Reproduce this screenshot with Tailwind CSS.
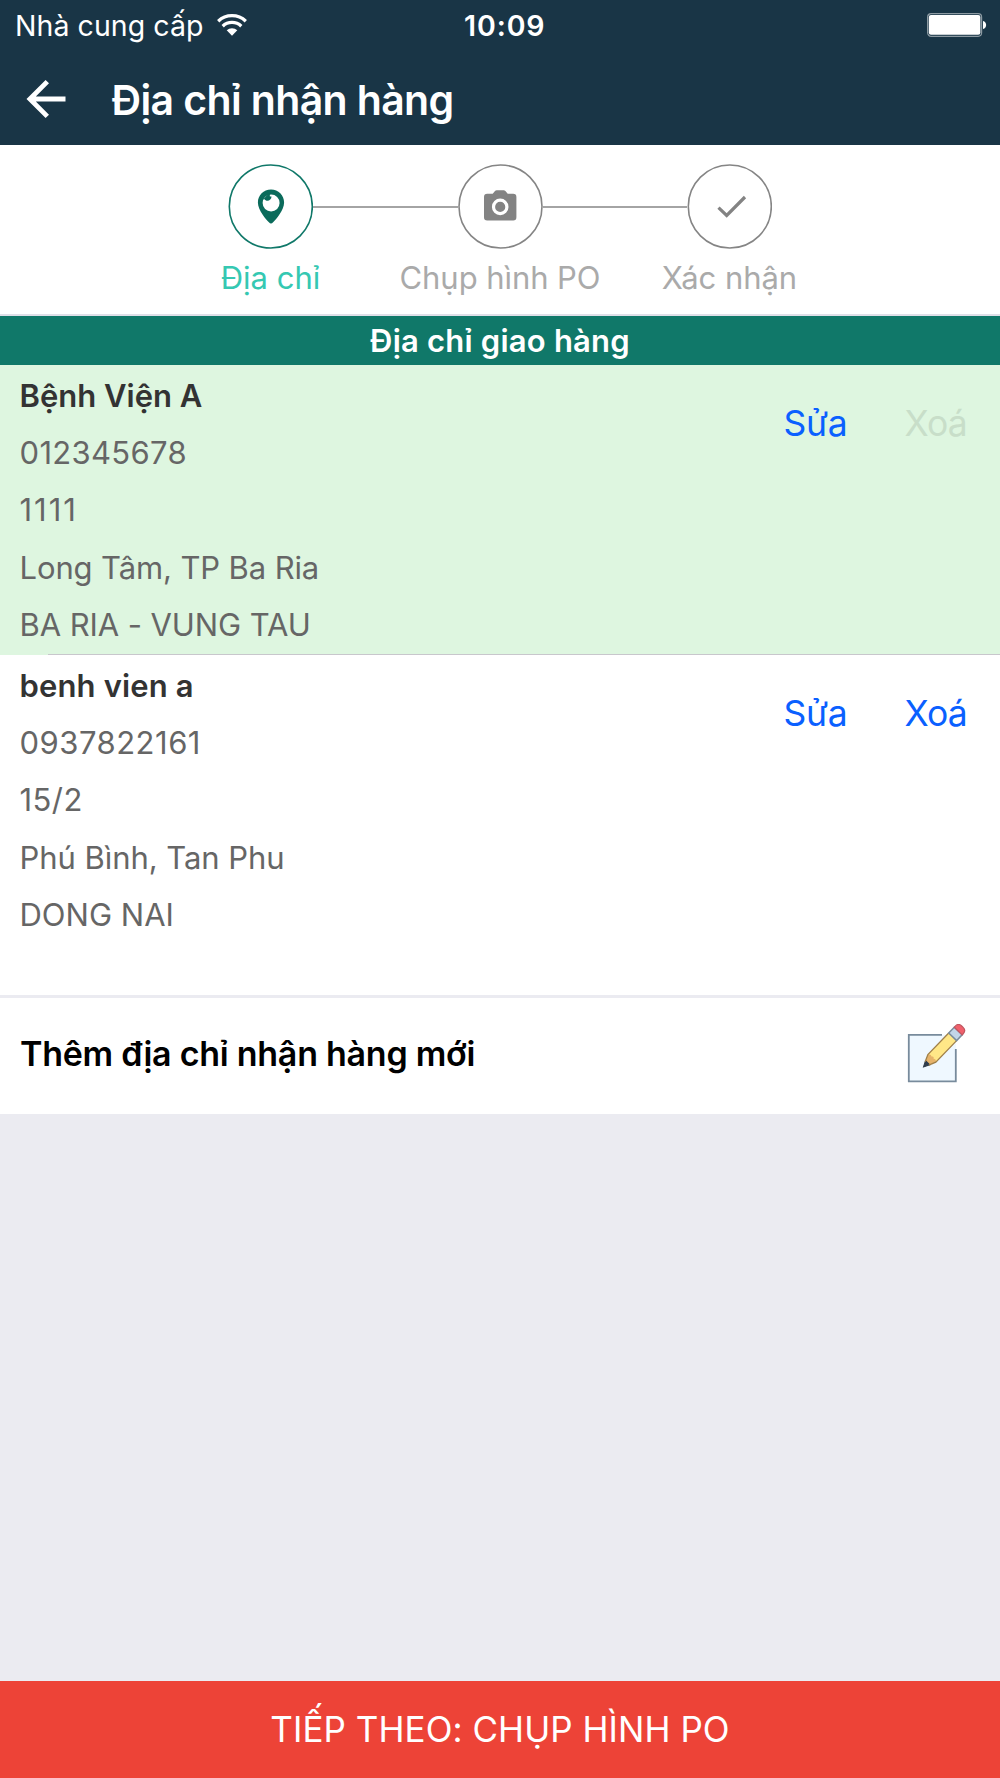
<!DOCTYPE html>
<html lang="vi">
<head>
    <meta charset="UTF-8">
    <meta name="viewport" content="width=device-width, initial-scale=1.0">
    <script src="https://cdn.jsdelivr.net/npm/@tailwindcss/browser@4"></script>
    <title>Địa chỉ nhận hàng</title>
</head>
<body class="bg-[#ebebf1] font-['Inter','Liberation_Sans',sans-serif]">
    <div class="flex h-[1778px] w-[1000px] flex-col overflow-hidden">
        <!-- Header -->
        <header class="h-[145px] shrink-0 bg-[#193546] text-white">
            <!-- Status bar -->
            <div class="grid h-[50px] grid-cols-3 items-center pl-[15px] pr-[13px] pt-px text-[28.5px] leading-[50px]">
                <div class="flex items-center gap-[13px]">
                    <span class="whitespace-nowrap tracking-[0.06px]">Nhà cung cấp</span>
                    <svg class="-mt-[3px] h-[22px] w-[30px]" viewBox="0 0 30 22" fill="none" stroke="#fff" stroke-width="3.3">
                        <path d="M1.2 7.2a20 20 0 0 1 27.6 0" />
                        <path d="M5.7 12.2a13.4 13.4 0 0 1 18.6 0" />
                        <path d="M9.7 16.3a7.6 7.6 0 0 1 10.6 0L15 21.7z" fill="#fff" stroke="none" />
                    </svg>
                </div>
                <span class="pl-[125px] font-semibold tracking-[0.9px]">10:09</span>
                <svg class="-mt-[2px] ml-auto h-[24px] w-[61px]" viewBox="0 0 61 24">
                    <rect x="1.6" y="0.7" width="54" height="22.6" rx="3.5" fill="none" stroke="#8c9aa2" stroke-width="1.2" />
                    <rect x="2.8" y="1.9" width="51.6" height="19.8" rx="2.2" fill="#fff" />
                    <path d="M57 8c4.2 .8 4.2 7.2 0 8z" fill="#fff" />
                </svg>
            </div>
            <!-- Title bar -->
            <div class="flex h-[95px] items-center pl-[26px] pt-1">
                <svg class="-mt-[2px] h-[40px] w-[40px]" viewBox="0 0 40 40" fill="none" stroke="#fff" stroke-width="4.8">
                    <path d="M39.5 20H4.5M21.3 2.6L3.9 20l17.4 17.4" />
                </svg>
                <h1 class="pl-[45.5px] pt-[2px] text-[41px] font-semibold leading-none tracking-[-0.63px]">Địa chỉ nhận hàng</h1>
            </div>
        </header>

        <!-- Steps -->
        <section class="flex h-[171px] shrink-0 flex-col border-b-2 border-[#dfdfe8] bg-white pt-[19px]">
            <div class="flex items-center justify-center">
                <svg class="size-[85px]" viewBox="0 0 85 85">
                    <circle cx="42.8" cy="42.5" r="41.5" fill="none" stroke="#107869" stroke-width="1.6" />
                    <g transform="translate(29.5 25.5)">
                        <path d="M13.5 0C6 0 .4 5.7 .4 13c0 8 8.3 17 11 19.8 1.5 1.6 2.7 1.6 4.2 0C18.3 30 26.6 21 26.6 13 26.6 5.7 21 0 13.5 0z" fill="#0b6b5b" />
                        <circle cx="13.6" cy="13.6" r="8.5" fill="#fff" />
                        <path d="M5 10.5L11 4.3q2.6 .6 1 2.2.9.7 2 .6c.1 4.2-5.2 5.6-7.3 2.400z" fill="#0b6b5b" />
                    </g>
                </svg>
                <div class="h-[2px] w-[144.5px] bg-[#a4a4a4]"></div>
                <svg class="size-[85px]" viewBox="0 0 85 85">
                    <circle cx="42.5" cy="42.5" r="41.5" fill="none" stroke="#858585" stroke-width="1.6" />
                    <g transform="translate(25.7 26)">
                        <path d="M3.5 3.8H9L11.3.9Q12 .2 13 .2h7q1 0 1.7.7L24 3.8h5.5a3.2 3.2 0 0 1 3.2 3.2v20.3a3.2 3.2 0 0 1-3.2 3.2h-26A3.2 3.2 0 0 1 .3 27.3V7a3.2 3.2 0 0 1 3.2-3.2z" fill="#838383" />
                        <circle cx="16.5" cy="16.9" r="6.7" fill="#838383" stroke="#fff" stroke-width="3.2" />
                    </g>
                </svg>
                <div class="h-[2px] w-[144.5px] bg-[#a4a4a4]"></div>
                <svg class="size-[85px]" viewBox="0 0 85 85">
                    <circle cx="42.8" cy="42.5" r="41.5" fill="none" stroke="#858585" stroke-width="1.6" />
                    <path d="M31.5 43.6L39.7 51.5 58 33" fill="none" stroke="#838383" stroke-width="3.2" />
                </svg>
            </div>
            <div class="mt-[9px] flex justify-center text-[31px] leading-[40px] text-[#aaa]">
                <span class="w-[229.5px] text-center text-[#35c8b2]">Địa chỉ</span>
                <span class="w-[229.5px] text-center tracking-[-0.06px]">Chụp hình PO</span>
                <span class="w-[229.5px] text-center tracking-[-0.04px]">Xác nhận</span>
            </div>
        </section>

        <!-- Address list -->
        <section class="shrink-0">
            <h2 class="h-[49px] bg-[#107869] text-center text-[31px] font-semibold leading-[49px] tracking-[0.21px] text-white">Địa chỉ giao hàng</h2>
            <div class="relative flex h-[290px] bg-[#def6e0] pl-[19.5px] pt-[2px] text-[31px] leading-[57.2px] text-[#666]">
                <div>
                    <p class="font-semibold text-[#333]">Bệnh Viện A</p>
                    <p class="tracking-[0.32px]">012345678</p>
                    <p class="tracking-[1.96px]">1111</p>
                    <p class="tracking-[-0.12px]">Long Tâm, TP Ba Ria</p>
                    <p class="tracking-[-0.08px]">BA RIA - VUNG TAU</p>
                </div>
                <div class="ml-auto flex w-[216.5px] pt-[29px] text-[35.5px] leading-[56px]">
                    <a class="w-[121px] tracking-[-0.2px] text-[#0a60ff]">Sửa</a>
                    <a class="tracking-[-0.8px] text-[#c8dec9]">Xoá</a>
                </div>
                <div class="absolute bottom-0 left-[48px] right-0 h-px bg-[#c8c7cc]"></div>
            </div>
            <div class="flex h-[340px] bg-white pl-[19.5px] pt-[2px] text-[31px] leading-[57.2px] text-[#666]">
                <div>
                    <p class="font-semibold tracking-[0.15px] text-[#333]">benh vien a</p>
                    <p class="tracking-[0.5px]">0937822161</p>
                    <p class="tracking-[0.46px]">15/2</p>
                    <p class="tracking-[-0.05px]">Phú Bình, Tan Phu</p>
                    <p>DONG NAI</p>
                </div>
                <div class="ml-auto flex w-[216.5px] pt-[29px] text-[35.5px] leading-[56px] text-[#0a60ff]">
                    <a class="w-[121px] tracking-[-0.2px]">Sửa</a>
                    <a class="tracking-[-0.8px]">Xoá</a>
                </div>
            </div>
        </section>

        <!-- New address -->
        <section class="flex h-[119px] shrink-0 items-center justify-between border-t-3 border-[#ebebf1] bg-white pb-[5px] pl-5 pr-[33.5px]">
            <span class="text-[34px] font-semibold leading-none tracking-[-0.25px] text-black">Thêm địa chỉ nhận hàng mới</span>
            <svg class="h-[60px] w-[60px]" viewBox="0 0 60 60">
                <rect x="1.8" y="10.8" width="47" height="46.5" fill="#eff8ff" />
                <path d="M35 10.8H1.8v46.5h47V25" fill="none" stroke="#788b9c" stroke-width="1.8" />
                <g transform="translate(16.5 43) rotate(-46)">
                    <path d="M0 0L12-5.5H42V5.5H12z" fill="#ffe787" />
                    <path d="M0 0L12-5.5Q15-3.5 13-1.5 15.5 0 13 1.5 15 3.5 12 5.5z" fill="#e6b36a" />
                    <path d="M0 0L6-3V3z" fill="#2f3d4d" stroke="#2f3d4d" stroke-width="1" />
                    <path d="M5-2.5L12-5.5H42M5 2.5L12 5.5H42" fill="none" stroke="#a0804a" stroke-width="1.3" />
                    <path d="M42-5.5h8v11h-8z" fill="#c2d5e8" stroke="#788b9c" stroke-width="1.5" />
                    <path d="M50-5.500h1.500q4.500 0 4.500 4.500v2q0 4.500-4.500 4.500H50z" fill="#f0606c" stroke="#c0565f" stroke-width="1.2" />
                </g>
            </svg>
        </section>

        <!-- Next step -->
        <button class="mt-auto h-[97px] shrink-0 bg-[#ed4337] text-center text-[35px] leading-[97px] tracking-[0.05px] text-white">TIẾP THEO: CHỤP HÌNH PO</button>
    </div>
</body>
</html>
